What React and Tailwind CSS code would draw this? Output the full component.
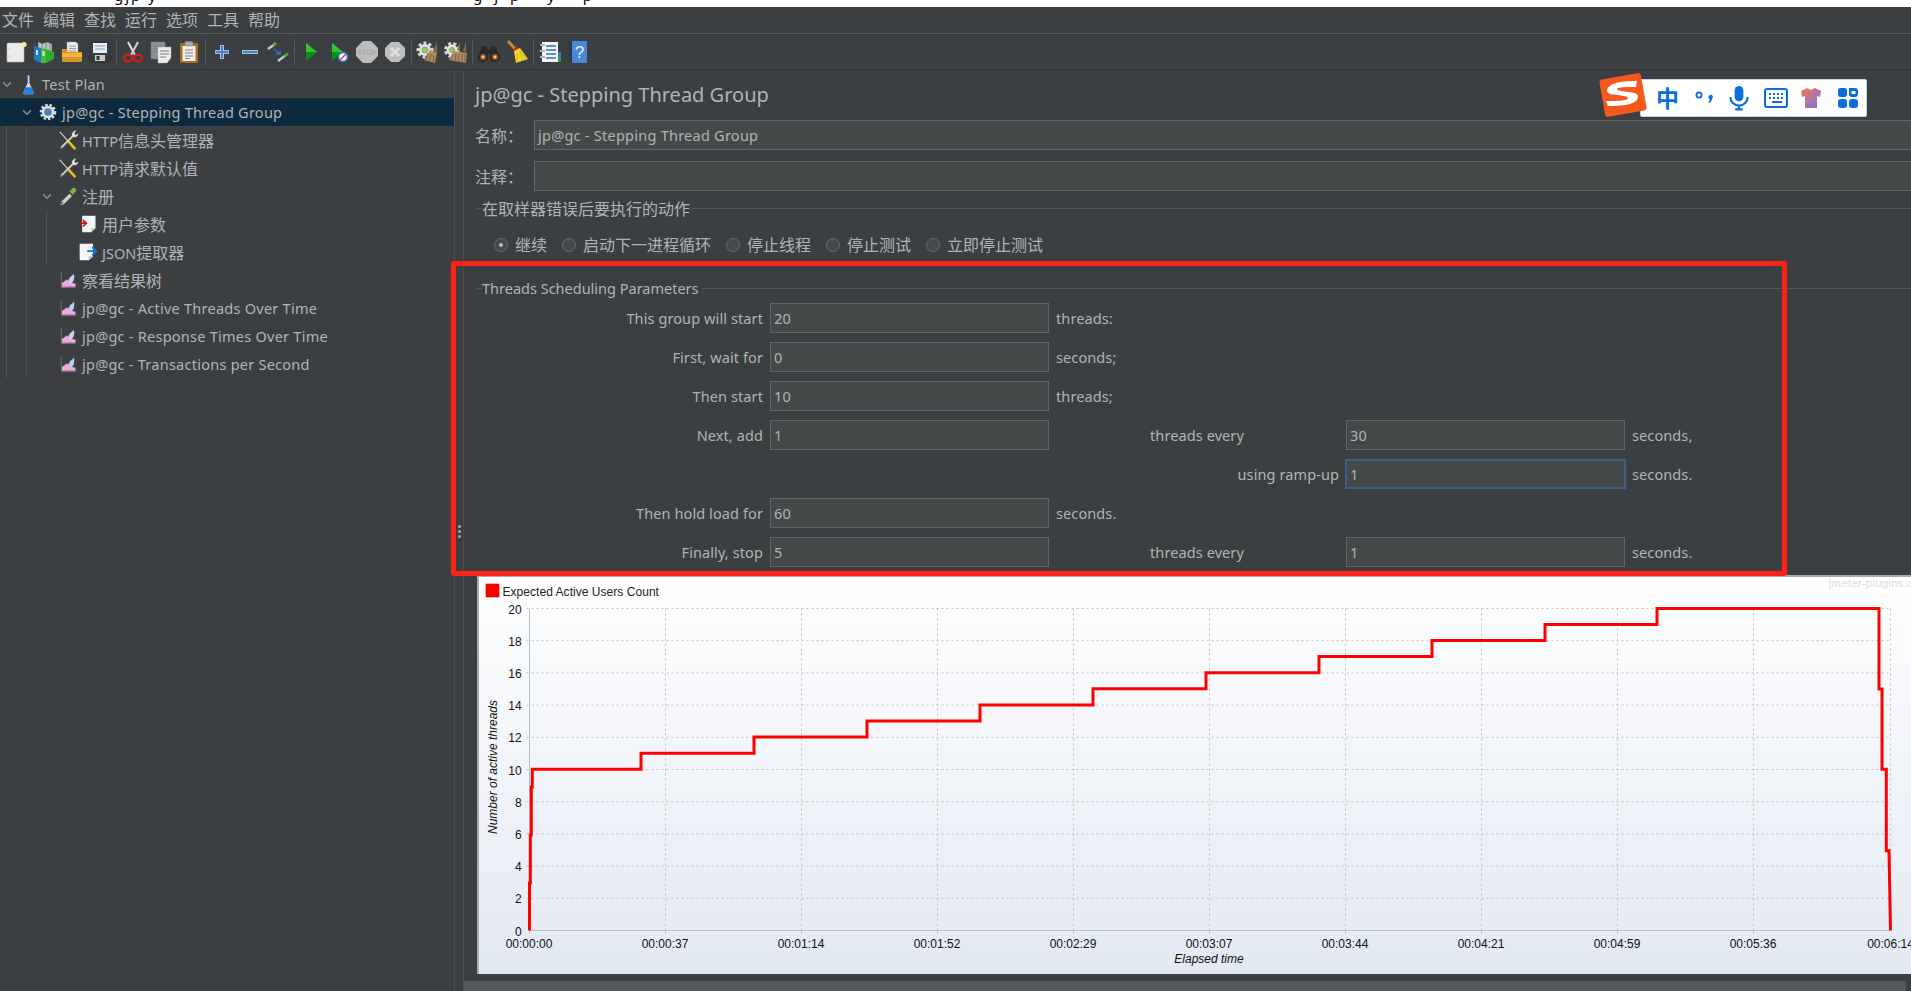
import { ChevronDown } from 'lucide-react'

const Ic = ({ children, size = 24 }) => (
  <svg viewBox="0 0 24 24" width={size} height={size} className="shrink-0">{children}</svg>
)

const Gear = ({ x = 12, y = 12, r = 8, core = '#8fd14f' }) => (
  <g>
    <circle cx={x} cy={y} r={r} fill="none" stroke="#d8d8d8" strokeWidth="3" strokeDasharray="3 2.2" />
    <circle cx={x} cy={y} r={r - 1} fill="#e2e2e2" />
    <circle cx={x} cy={y} r={r - 4} fill={core} stroke="#9a9a9a" strokeWidth="1" />
  </g>
)

const icons = {
  newFile: (
    <Ic>
      <rect x="3" y="3" width="17" height="19" rx="1" fill="#ececec" stroke="#b5b5b5" strokeWidth="0.6" />
      <circle cx="5.5" cy="9" r="0.6" fill="#999" />
      <circle cx="5.5" cy="16" r="0.6" fill="#999" />
      <circle cx="20" cy="4.5" r="2.6" fill="#f5ee8e" />
    </Ic>
  ),
  templates: (
    <Ic>
      <path d="M6 2l5 2 4-2 5 2v8H6z" fill="#9fa8a8" />
      <path d="M8 3v8M12 3v8M16 3v8" stroke="#dfe3e3" strokeWidth="1" />
      <path d="M2 6l7 2v15l-7-3z" fill="#1f78c8" />
      <path d="M9 8l5 1v14H9z" fill="#49b53b" />
      <path d="M14 9l8 3v7l-8 4z" fill="#2fae2c" />
      <rect x="4" y="10" width="2" height="5" fill="#cfe6fb" />
      <rect x="10.5" y="11" width="2" height="5" fill="#d3f0cc" />
    </Ic>
  ),
  open: (
    <Ic>
      <path d="M7 2h9l2 2v10H7z" fill="#ececec" stroke="#999" strokeWidth="0.5" />
      <path d="M9 6h7M9 8.5h7M9 11h7" stroke="#888" strokeWidth="0.8" />
      <path d="M2 9h5l1 3h14v9a1 1 0 0 1-1 1H3a1 1 0 0 1-1-1z" fill="#d6962a" />
      <path d="M2 13h20v4H2z" fill="#f0b63f" />
    </Ic>
  ),
  save: (
    <Ic>
      <rect x="2" y="2" width="20" height="20" rx="2" fill="#3b3e40" stroke="#20242a" strokeWidth="0.6" />
      <rect x="5" y="3" width="14" height="10" fill="#e6edf4" />
      <path d="M7 6h10M7 9h10" stroke="#7da2c8" strokeWidth="1" />
      <rect x="7" y="15" width="10" height="6" fill="#c9c9c9" />
      <rect x="8.5" y="16" width="3" height="4" fill="#333" />
    </Ic>
  ),
  cut: (
    <Ic>
      <path d="M7 2l7 13M17 2l-7 13" stroke="#c9ccce" strokeWidth="2.2" fill="none" />
      <path d="M7 2l5 9" stroke="#eee" strokeWidth="0.8" />
      <ellipse cx="7" cy="18" rx="4" ry="3.4" fill="none" stroke="#d0201c" strokeWidth="2.2" />
      <ellipse cx="17" cy="18" rx="4" ry="3.4" fill="none" stroke="#d0201c" strokeWidth="2.2" />
    </Ic>
  ),
  copy: (
    <Ic>
      <rect x="2" y="2" width="14" height="17" fill="#8e9193" stroke="#6f7274" strokeWidth="0.5" />
      <path d="M4 6h10M4 9h10M4 12h10" stroke="#777" strokeWidth="0.8" />
      <path d="M9 7h13v11l-4 5H9z" fill="#ececec" stroke="#aaa" strokeWidth="0.5" />
      <path d="M11 11h9M11 14h9M11 17h6" stroke="#777" strokeWidth="0.9" />
    </Ic>
  ),
  paste: (
    <Ic>
      <rect x="3" y="3" width="18" height="20" rx="1" fill="#a96c1f" />
      <rect x="5.5" y="6" width="13" height="15" fill="#efefef" />
      <path d="M8 10h8M8 13h8M8 16h8M8 18.5h5" stroke="#777" strokeWidth="0.9" />
      <rect x="8" y="1.5" width="8" height="4.5" rx="1" fill="#a9acae" stroke="#777" strokeWidth="0.5" />
    </Ic>
  ),
  plus: (
    <Ic>
      <path d="M12 5v14M5 12h14" stroke="#cfe0f2" strokeWidth="3.6" />
      <path d="M12 5.500v13M5.500 12h13" stroke="#3f86cf" strokeWidth="2" />
    </Ic>
  ),
  minus: (
    <Ic>
      <path d="M4 12h16" stroke="#cfe0f2" strokeWidth="3.6" />
      <path d="M4.500 12h15" stroke="#3f86cf" strokeWidth="2" />
    </Ic>
  ),
  toggle: (
    <Ic>
      <path d="M2 9l7-5" stroke="#c9ccc9" strokeWidth="2.2" />
      <path d="M7 5.500l3-2.500" stroke="#58a83c" strokeWidth="2.6" />
      <path d="M12 21l8-6" stroke="#c9ccc9" strokeWidth="2.2" />
      <path d="M18 16.500l4-3" stroke="#58a83c" strokeWidth="2.6" />
      <path d="M8 9l6 5M14 10.500V14h-4" stroke="#2b78d0" strokeWidth="1.5" fill="none" />
    </Ic>
  ),
  play: (
    <Ic>
      <path d="M7 3l11 9-11 9z" fill="#0b8f14" />
      <path d="M7 3l11 9H7z" fill="#35c235" />
    </Ic>
  ),
  playNoTimers: (
    <Ic>
      <path d="M5 3l11 9-11 9z" fill="#0b8f14" />
      <path d="M5 3l11 9H5z" fill="#35c235" />
      <circle cx="16" cy="17" r="4.500" fill="#f2f6fb" stroke="#2b78d0" strokeWidth="1.6" />
      <path d="M13 20l6-6" stroke="#d83a3a" strokeWidth="1.2" />
    </Ic>
  ),
  stop: (
    <Ic>
      <path d="M8 1h8l7 7v8l-7 7H8l-7-7V8z" fill="#bdbdbd" />
      <text x="12" y="14.500" textAnchor="middle" fontSize="7.400" fontWeight="700" fill="#a6a6a6" fontFamily="Liberation Sans, sans-serif">STOP</text>
    </Ic>
  ),
  shutdown: (
    <Ic>
      <path d="M8 2h8l6 6v8l-6 6H8l-6-6V8z" fill="#bdbdbd" />
      <path d="M8 8l8 8M16 8l-8 8" stroke="#dedede" strokeWidth="3" />
    </Ic>
  ),
  clear: (
    <Ic>
      <Gear x={9} y={10} r={7} />
      <path d="M21 2l-4 9 4 2z" fill="#8d6a45" />
      <path d="M14 10l7 3-2 10-11-3z" fill="#b08a62" />
      <path d="M12 13l-2 7M15 14l-2 8M18 15l-1 8" stroke="#7c5a38" strokeWidth="0.9" />
    </Ic>
  ),
  clearAll: (
    <Ic>
      <Gear x={8} y={10} r={6.500} />
      <path d="M16 2l-3 8 3 1zM22 2l-3 9 3 1z" fill="#8d6a45" />
      <path d="M10 11l13 2-1 10-17-3z" fill="#b08a62" />
      <path d="M9 14l-2 6M12 14l-1 8M15 14l-1 8M18 14l0 9M21 14l0 8" stroke="#7c5a38" strokeWidth="0.9" />
    </Ic>
  ),
  binoculars: (
    <Ic>
      <path d="M5 6h5l1 4h2l1-4h5l4 11h-9l-.5-3h-3l-.5 3H1z" fill="#2a2a2a" />
      <circle cx="6" cy="17" r="5" fill="#2a2a2a" />
      <circle cx="18" cy="17" r="5" fill="#2a2a2a" />
      <circle cx="6" cy="17" r="3" fill="#a8581e" />
      <circle cx="18" cy="17" r="3" fill="#a8581e" />
      <circle cx="6" cy="17" r="1.400" fill="#e8c9a0" />
      <circle cx="18" cy="17" r="1.400" fill="#e8c9a0" />
    </Ic>
  ),
  broom: (
    <Ic>
      <path d="M3 1l8 9" stroke="#c08a2c" strokeWidth="3" />
      <path d="M8 9l5-2 1 3-4 2z" fill="#d02a1c" />
      <path d="M9 11l6-3 8 11-12 4z" fill="#f2d52e" />
      <path d="M12 12l1 10M15 11l3 10M18 14l3 5" stroke="#c8a818" strokeWidth="0.8" />
    </Ic>
  ),
  list: (
    <Ic>
      <rect x="4" y="2" width="16" height="20" fill="#f4f4f4" />
      <rect x="20" y="12" width="3" height="5" fill="#2f7fd0" />
      <rect x="20" y="17" width="3" height="5" fill="#2f9f3f" />
      <path d="M8 6h10M8 10h10M8 14h10M8 18h10" stroke="#2b6fc0" strokeWidth="1.300" />
      <path d="M2 5h5M2 11h5M2 17h5" stroke="#e8e8e8" strokeWidth="2" />
      <path d="M2 5h5M2 11h5M2 17h5" stroke="#333" strokeWidth="0.6" />
    </Ic>
  ),
  help: (
    <Ic>
      <rect x="3" y="1" width="18" height="22" rx="1" fill="#2a3a50" />
      <rect x="6" y="1" width="15" height="22" rx="1" fill="#4a87d6" />
      <text x="13.500" y="18" textAnchor="middle" fontSize="17" fill="#e8f0fb" fontFamily="Liberation Sans, sans-serif">?</text>
    </Ic>
  ),
  flask: (
    <Ic size={21}>
      <path d="M11 1l2 1v8l5 11a1.500 1.500 0 0 1-1.500 2h-9A1.500 1.500 0 0 1 6 21l5-11z" fill="#d3d9de" />
      <path d="M8.500 15h7l2.500 6a1.500 1.500 0 0 1-1.500 2h-9A1.500 1.500 0 0 1 6 21z" fill="#2382e0" />
    </Ic>
  ),
  gear: (
    <Ic size={20}>
      <Gear r={8.500} core="#3f7fd0" />
    </Ic>
  ),
  tools: (
    <Ic size={22}>
      <path d="M3 3l8 9" stroke="#e6e6e6" strokeWidth="1.200" />
      <path d="M11 12l9 10" stroke="#efc21a" strokeWidth="2.800" />
      <path d="M4 21L18 7" stroke="#cfcfcf" strokeWidth="2" />
      <path d="M17 8a4.500 4.500 0 0 1 3-6l-1.500 3 1.500 2 3-1a4.500 4.500 0 0 1-6 2z" fill="#e8e8e8" stroke="#dcdcdc" />
      <circle cx="4.500" cy="20.500" r="1" fill="#555" />
    </Ic>
  ),
  dropper: (
    <Ic size={20}>
      <path d="M3 23l1-4L14 9l3 3L7 22z" fill="#c9cfcf" />
      <path d="M4 22l2-3" stroke="#333" strokeWidth="1.200" />
      <path d="M13 7l4-4a2.600 2.600 0 0 1 4 4l-4 4z" fill="#6fb54a" />
      <path d="M12 6l6 6" stroke="#3d3d3d" strokeWidth="2" />
    </Ic>
  ),
  preProc: (
    <Ic size={20}>
      <path d="M5 2h16v15l-5 5H5z" fill="#f6f6f6" />
      <path d="M16 22v-5h5z" fill="#bdbdbd" />
      <path d="M1 11h8M6 7l4 4-4 4" stroke="#c81616" strokeWidth="2" fill="none" />
    </Ic>
  ),
  postProc: (
    <Ic size={20}>
      <path d="M2 2h16v15l-5 5H2z" fill="#f6f6f6" />
      <path d="M13 22v-5h5z" fill="#bdbdbd" />
      <path d="M11 11h10M17 6l5 5-5 5" stroke="#1272d8" strokeWidth="2.200" fill="none" />
    </Ic>
  ),
  graph: (
    <Ic size={18}>
      <path d="M3 2v20h19" stroke="#7f8487" strokeWidth="1" fill="none" />
      <path d="M4 21v-5l7-5 3 4 8 2v4z" fill="#f2a6dc" />
      <path d="M13 16c-2-4 2-9 7-12 1 5 0 10-3 12z" fill="#bcd3ee" />
    </Ic>
  ),
}

const Btn = ({ name }) => <div className="w-[28px] flex justify-center items-center">{icons[name]}</div>
const Sep = () => <div className="w-[5px] flex justify-center"><div className="w-px h-[26px] bg-[#55585a]" /></div>

const toolbar = [
  ['newFile', 'templates', 'open', 'save'],
  ['cut', 'copy', 'paste'],
  ['plus', 'minus', 'toggle'],
  ['play', 'playNoTimers', 'stop', 'shutdown'],
  ['clear', 'clearAll'],
  ['binoculars', 'broom'],
  ['list', 'help'],
]

const menus = ['文件', '编辑', '查找', '运行', '选项', '工具', '帮助']

const tree = [
  { d: 0, open: true, icon: 'flask', label: 'Test Plan', latin: true },
  { d: 1, open: true, icon: 'gear', label: 'jp@gc - Stepping Thread Group', latin: true, selected: true },
  { d: 2, icon: 'tools', label: <><span className="text-[14.5px]">HTTP</span>信息头管理器</> },
  { d: 2, icon: 'tools', label: <><span className="text-[14.5px]">HTTP</span>请求默认值</> },
  { d: 2, open: true, icon: 'dropper', label: '注册' },
  { d: 3, icon: 'preProc', label: '用户参数' },
  { d: 3, icon: 'postProc', label: <><span className="text-[14.5px]">JSON</span>提取器</> },
  { d: 2, icon: 'graph', label: '察看结果树' },
  { d: 2, icon: 'graph', label: 'jp@gc - Active Threads Over Time', latin: true },
  { d: 2, icon: 'graph', label: 'jp@gc - Response Times Over Time', latin: true },
  { d: 2, icon: 'graph', label: 'jp@gc - Transactions per Second', latin: true },
]

const TreeRow = ({ d, open, icon, label, latin, selected }) => (
  <div
    className={`h-[28px] flex items-center relative ${selected ? 'bg-[#0d293e]' : ''}`}
    style={{ paddingLeft: d * 20 }}
  >
    <div className="w-[14px] flex justify-center text-[#85898c]">
      {open && <ChevronDown size={15} strokeWidth={3} />}
    </div>
    <div className="w-[22px] ml-[3px] mr-[3px] flex justify-center">
      {icons[icon]}
    </div>
    <span className={`whitespace-nowrap pt-[2px] ${latin ? 'text-[14.5px] tracking-[0.25px]' : 'text-[16px]'}`}>{label}</span>
  </div>
)

const Field = ({ value, focus, className = '' }) => (
  <div
    className={`h-[30px] flex items-center bg-[#45494a] text-[14.5px] tracking-[0.25px] pl-[3px] pt-[2px] ${
      focus ? 'border-2 border-[#3d6185] -mx-px' : 'border border-[#646464]'
    } ${className}`}
  >
    {value}
  </div>
)

const Legend = ({ children, className = '' }) => (
  <div className={`h-[18px] flex items-center ml-[13px] ${className}`}>
    <div className="w-[5px] h-px bg-[#555759]" />
    <span className="whitespace-nowrap pr-[2px] pt-[1px]">{children}</span>
    <div className="flex-1 h-px bg-[#555759]" />
  </div>
)

const Label = ({ children }) => <div className="h-[30px] flex items-center justify-end pr-[7px] pt-[2px] tracking-[0.1px]">{children}</div>
const Unit = ({ children }) => <div className="h-[30px] flex items-center pl-[7px] pt-[2px] tracking-[0.1px]">{children}</div>
const Blank = () => <div />

const xTicks = ['00:00:00', '00:00:37', '00:01:14', '00:01:52', '00:02:29', '00:03:07', '00:03:44', '00:04:21', '00:04:59', '00:05:36']
const X0 = 50.5
const TOP = 31.5
const Y0 = 353.5
const XEND = 1411.5
const stepY = (Y0 - TOP) / 10

// expected thread curve, in pixels of the chart
const curve = (() => {
  const pts = [[50.5, Y0], [50.5, 306], [51.3, 306], [51.3, 258], [52.3, 258], [52.3, 210], [53.3, 210], [53.3, 192.3]]
  const steps = [162, 275, 388, 501, 614, 727, 840, 953, 1066, 1178]
  let y = 192.3
  steps.forEach((x, i) => {
    pts.push([x, y])
    y = i === steps.length - 1 ? TOP : 192.3 - (i + 1) * 16.1
    pts.push([x, y])
  })
  pts.push([1400, TOP], [1400, 112], [1403, 112], [1403, 192.3], [1407.3, 192.3], [1407.3, 273.7], [1410, 273.7], [1411.5, Y0])
  return pts.map((p) => p.join(',')).join(' ')
})()

function Chart() {
  return (
    <svg viewBox="0 0 1432 397" width="1432" height="397" className="block" fontFamily="Liberation Sans, Arial, sans-serif" fontSize="12">
      <rect x="7" y="7" width="13" height="13" fill="#ff0000" stroke="#cc0000" strokeWidth="0.6" />
      <text x="23.5" y="19" fill="#222" letterSpacing="0.04">Expected Active Users Count</text>
      <text x="1350" y="10" fontSize="11" letterSpacing="0.4" fill="#d9dcdf">jmeter-plugins.org</text>

      {Array.from({ length: 10 }, (_, i) => (
        <g key={i}>
          <line x1={X0 - 3} x2={XEND} y1={TOP + i * stepY} y2={TOP + i * stepY} stroke="#c2c2c2" strokeDasharray="2 3" />
          <text x="42.7" y={TOP + i * stepY + 5} textAnchor="end" fill="#111">{20 - i * 2}</text>
        </g>
      ))}
      <text x="42.7" y={Y0 + 5} textAnchor="end" fill="#111">0</text>

      {xTicks.map((t, i) => {
        const x = X0 + i * 136
        return (
          <g key={t}>
            {i > 0 && <line x1={x} x2={x} y1={TOP} y2={Y0} stroke="#c2c2c2" strokeDasharray="2 3" />}
            <line x1={x} x2={x} y1={Y0} y2={Y0 + 3} stroke="#b8bfcc" />
            <text x={x - 0.5} y={370.5} textAnchor="middle" fill="#111">{t}</text>
          </g>
        )
      })}
      <line x1={XEND} x2={XEND} y1={TOP} y2={Y0 + 3} stroke="#c2c2c2" strokeDasharray="2 3" />
      <text x={XEND} y={370.5} textAnchor="middle" fill="#111">00:06:14</text>

      <line x1={X0} x2={X0} y1={TOP} y2={Y0} stroke="#b8bfcc" />
      <line x1={X0} x2={XEND} y1={Y0} y2={Y0} stroke="#b8bfcc" />

      <polyline points={curve} fill="none" stroke="#ff0000" strokeWidth="3" />

      <text x="18" y="190" textAnchor="middle" fontStyle="italic" transform="rotate(-90 18 190)" fill="#111">Number of active threads</text>
      <text x="730" y="386" textAnchor="middle" fontStyle="italic" fill="#111">Elapsed time</text>
    </svg>
  )
}

function ImeBar() {
  return (
    <div className="absolute left-[1599px] top-[72px] w-[268px] h-[46px]">
      <div className="absolute left-[41px] top-[7px] right-0 h-[38px] bg-white border border-[#c5d3e4] rounded-[2px] flex items-center text-[#0a6fdc]">
        <span className="absolute left-[15px] text-[23px] font-bold leading-none">中</span>
        <svg viewBox="0 0 24 16" className="absolute left-[52px] top-[9px] w-[24px] h-[16px]">
          <circle cx="6" cy="6" r="2.6" fill="none" stroke="#0a6fdc" strokeWidth="1.8" />
          <path d="M15.500 8a2.200 2.200 0 1 1 3.800 1.500c-.5 2-1.500 3.500-3 4.500l-.8-.6c.7-1 1.200-2 1.300-3.100-.8-.2-1.300-1-1.300-2.300z" fill="#0a6fdc" />
        </svg>
        <svg viewBox="0 0 24 24" className="absolute left-[85px] top-[5px] w-[26px] h-[26px]" fill="none">
          <rect x="8" y="1" width="8" height="14" rx="4" fill="#0a6fdc" />
          <path d="M4 11a8 8 0 0 0 16 0M12 19v3M8.500 22.500h7" stroke="#0a6fdc" strokeWidth="2" />
        </svg>
        <svg viewBox="0 0 24 20" className="absolute left-[123px] top-[8px] w-[24px] h-[20px]">
          <rect x="1" y="1" width="22" height="18" rx="2" fill="none" stroke="#0a6fdc" strokeWidth="2" />
          <path d="M5 5h2v2H5zM9 5h2v2H9zM13 5h2v2h-2zM17 5h2v2h-2zM5 9h2v2H5zM9 9h2v2H9zM13 9h2v2h-2zM17 9h2v2h-2zM8 13h10v2H8z" fill="#0a6fdc" />
        </svg>
        <svg viewBox="0 0 24 24" className="absolute left-[158px] top-[6px] w-[24px] h-[24px]">
          <defs>
            <linearGradient id="shirt" x1="0" y1="0" x2="1" y2="1">
              <stop offset="0" stopColor="#f47a4a" />
              <stop offset="1" stopColor="#7a6ff0" />
            </linearGradient>
          </defs>
          <path d="M8 2l4 2 4-2 6 3-1 6-3-1v12H6V10l-3 1-1-6z" fill="url(#shirt)" />
        </svg>
        <svg viewBox="0 0 20 20" className="absolute left-[197px] top-[8px] w-[20px] h-[20px]" fill="#0a6fdc">
          <rect x="0" y="0" width="9" height="9" rx="2.500" />
          <path d="M11 0h6a3 3 0 0 1 3 3v3a3 3 0 0 1-3 3h-3a3 3 0 0 1-3-3zM13.500 3v3h4V3z" fillRule="evenodd" />
          <rect x="0" y="11" width="9" height="9" rx="3" />
          <rect x="11" y="11" width="9" height="9" rx="3" />
        </svg>
      </div>
      <svg viewBox="0 0 48 46" className="absolute left-0 top-0 w-[48px] h-[46px]">
        <rect x="3" y="4" width="42" height="38" rx="3" fill="#f4581c" transform="rotate(-10 24 23)" />
        <path d="M38 9C26 9 10 10 8 18c-1 7 20 4 21 8 0 3-12 3-22 3 1 3 2 5 2 5 14 0 29-1 30-9 1-7-20-4-21-8 1-2 10-2 19-2z" fill="#fff" />
      </svg>
    </div>
  )
}

export default function App() {
  return (
    <div className="relative w-[1911px] h-[991px] overflow-hidden bg-[#3c3f41] text-[#b0b3b5] text-[14.5px] font-['Noto_Sans','Noto_Sans_CJK_SC',sans-serif]">
      <div className="h-[7px] bg-white overflow-hidden relative text-black text-[15px] leading-none">
        <span className="absolute left-[114px] -top-[12px] tracking-[2px]">gjp y</span>
        <span className="absolute left-[473px] -top-[12px] tracking-[12px]">gjp y p</span>
      </div>

      <div className="h-[27px] flex items-center gap-[9px] pl-[2px] text-[16px] border-b border-[#55585a]">
        {menus.map((m) => <span key={m}>{m}</span>)}
      </div>

      <div className="h-[36px] flex items-center pl-[2px] border-b border-[#323232]">
        {toolbar.map((group, i) => (
          <div key={i} className="flex items-center">
            {i > 0 && <Sep />}
            {group.map((name) => <Btn key={name} name={name} />)}
          </div>
        ))}
      </div>

      <div className="flex h-[921px]">
        <div className="relative w-[455px] border-r border-[#4b4d4e]">
          <div className="absolute left-[6px] top-[28px] w-px h-[280px] bg-[#4f5254]" />
          <div className="absolute left-[26px] top-[56px] w-px h-[252px] bg-[#4f5254]" />
          <div className="absolute left-[46px] top-[140px] w-px h-[55px] bg-[#4f5254]" />
          {tree.map((row, i) => <TreeRow key={i} {...row} />)}
        </div>

        <div className="w-[9px] pt-[455px] flex flex-col items-center gap-[2px] border-r border-[#4b4d4e]">
          <div className="w-[3px] h-[3px] rounded-full bg-[#aaaaaa]" />
          <div className="w-[3px] h-[3px] rounded-full bg-[#aaaaaa]" />
          <div className="w-[3px] h-[3px] rounded-full bg-[#aaaaaa]" />
        </div>

        <div className="flex-1 min-w-0">
          <div className="h-[50px] flex items-center pl-[11px] text-[20px]">jp@gc - Stepping Thread Group</div>

          <div className="flex items-center h-[30px] pl-[11px]">
            <span className="w-[59px] text-[16px] pt-[1px]">名称：</span>
            <Field value="jp@gc - Stepping Thread Group" className="flex-1 border-r-0" />
          </div>
          <div className="flex items-center h-[30px] pl-[11px] mt-[11px]">
            <span className="w-[59px] text-[16px] pt-[1px]">注释：</span>
            <Field value="" className="flex-1 border-r-0" />
          </div>

          <Legend className="mt-[8px] text-[16px]">在取样器错误后要执行的动作</Legend>

          <div className="h-[30px] mt-[13px] ml-[30px] flex items-center gap-[15px] text-[16px]">
            {['继续', '启动下一进程循环', '停止线程', '停止测试', '立即停止测试'].map((t, i) => (
              <div key={t} className="flex items-center gap-[7px]">
                <div className="w-[14px] h-[14px] rounded-full bg-[#45494a] border border-[#6b6b6b] flex items-center justify-center">
                  {i === 0 && <div className="w-[4px] h-[4px] rounded-full bg-[#bbbbbb]" />}
                </div>
                <span>{t}</span>
              </div>
            ))}
          </div>

          <Legend className="mt-[19px]">Threads Scheduling Parameters</Legend>

          <div className="mt-[6px] ml-[13px] grid grid-cols-[293px_279px_101px_196px_279px_1fr] gap-y-[9px]">
            <Label>This group will start</Label><Field value="20" /><Unit>threads:</Unit><Blank /><Blank /><Blank />
            <Label>First, wait for</Label><Field value="0" /><Unit>seconds;</Unit><Blank /><Blank /><Blank />
            <Label>Then start</Label><Field value="10" /><Unit>threads;</Unit><Blank /><Blank /><Blank />
            <Label>Next, add</Label><Field value="1" /><Blank />
            <div className="h-[30px] flex items-center pt-[2px] tracking-[0.1px]">threads every</div><Field value="30" /><Unit>seconds,</Unit>
            <Blank /><Blank /><Blank />
            <Label>using ramp-up</Label><Field value="1" focus /><Unit>seconds.</Unit>
            <Label>Then hold load for</Label><Field value="60" /><Unit>seconds.</Unit><Blank /><Blank /><Blank />
            <Label>Finally, stop</Label><Field value="5" /><Blank />
            <div className="h-[30px] flex items-center pt-[2px] tracking-[0.1px]">threads every</div><Field value="1" /><Unit>seconds.</Unit>
          </div>

          <div className="mt-[8px] ml-[13px] border-t-2 border-l-2 border-[#a8aaac] bg-gradient-to-b from-white to-[#e3e9f3] overflow-hidden">
            <Chart />
          </div>

          <div className="mt-[7px] mr-[5px] h-[10px] bg-[#565758]" />
        </div>
      </div>

      <div className="absolute left-[451px] top-[261px] w-[1336px] h-[315px] border-[5px] border-[#ff2116] rounded-[3px]" />
      <ImeBar />
    </div>
  )
}
